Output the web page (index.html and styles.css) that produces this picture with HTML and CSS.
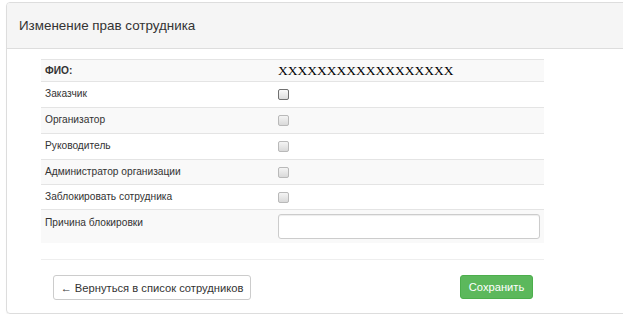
FILE: index.html
```html
<!DOCTYPE html>
<html lang="ru">
<head>
    <meta charset="UTF-8">
    <title>Изменение прав сотрудника</title>
    <link rel="stylesheet" href="styles.css">
</head>
<body>
  <div class="panel">
    <div class="panel-heading">
      <h3 class="panel-title">Изменение прав сотрудника</h3>
    </div>

    <div class="panel-body">
      <table class="rights-table">
        <tr class="fio-row">
          <td class="label-cell"><b>ФИО:</b></td>
          <td class="fio-value">XXXXXXXXXXXXXXXXXX</td>
        </tr>
        <tr>
          <td class="label-cell">Заказчик</td>
          <td><span class="check check-active"></span></td>
        </tr>
        <tr>
          <td class="label-cell">Организатор</td>
          <td><span class="check"></span></td>
        </tr>
        <tr>
          <td class="label-cell">Руководитель</td>
          <td><span class="check"></span></td>
        </tr>
        <tr class="short-row">
          <td class="label-cell">Администратор организации</td>
          <td><span class="check"></span></td>
        </tr>
        <tr class="short-row">
          <td class="label-cell">Заблокировать сотрудника</td>
          <td><span class="check"></span></td>
        </tr>
        <tr class="reason-row">
          <td class="label-cell">Причина блокировки</td>
          <td><input class="reason-input" type="text"></td>
        </tr>
      </table>

      <hr class="divider">

      <div class="actions">
        <button class="btn btn-default">&larr; Вернуться в список сотрудников</button>
        <button class="btn btn-success">Сохранить</button>
      </div>
    </div>
  </div>
</body>
</html>
```

FILE: styles.css
```css
:root {
  --clr-border: #dddddd;
  --clr-row: #f9f9f9;
  --clr-text: #333333;
  --clr-green: #5cb85c;
}
* { margin: 0; padding: 0; box-sizing: border-box; }
body {
  font-family: "Liberation Sans", Arial, sans-serif;
  font-size: 10.2px;
  color: var(--clr-text);
  background: #fff;
  padding: 2px 0 0 6px;
  overflow: hidden;
}
.panel {
  width: 660px;
  border: 1px solid var(--clr-border);
  border-radius: 4px;
  box-shadow: 0 1px 1px rgba(0,0,0,0.05);
}
.panel-heading {
  height: 46px;
  padding: 0 12px;
  display: flex;
  align-items: center;
  background: #f5f5f5;
  border-bottom: 1px solid var(--clr-border);
  border-radius: 3px 3px 0 0;
}
.panel-title {
  font-size: 13.4px;
  font-weight: normal;
  color: #333;
}
.panel-body {
  padding: 10px 0 13px 34px;
}
.rights-table {
  width: 503px;
  border-collapse: collapse;
}
.rights-table td {
  border-top: 1px solid #e4e4e4;
  padding: 3px 4px 5px;
  line-height: 17px;
  vertical-align: top;
}
.rights-table td:first-child { width: 237px; }
.rights-table tr:nth-child(odd) td { background: var(--clr-row); }
.fio-row td {
  padding: 2px 4px 2px;
  line-height: 17px;
}
.fio-row b { font-weight: bold; }
.fio-value {
  font-family: "Liberation Serif", "Times New Roman", serif;
  font-size: 13.5px;
  color: #000;
}
.short-row td { padding-bottom: 4px; }
.check {
  display: block;
  width: 11px;
  height: 11px;
  margin-top: 4px;
  border: 1px solid #b9b9b9;
  border-radius: 2px;
  background: linear-gradient(#f4f4f4, #d9d9d9);
}
.check-active {
  border-color: #707070;
  background: linear-gradient(#fafafa, #dcdcdc);
}
.reason-row td { padding: 4px 4px 4px; }
.reason-input {
  display: block;
  width: 262px;
  height: 25px;
  border: 1px solid #cccccc;
  border-radius: 3px;
  background: #fff;
  box-shadow: inset 0 1px 1px rgba(0,0,0,0.075);
}
.divider {
  width: 503px;
  border: 0;
  border-top: 1px solid #eeeeee;
  margin: 16px 0 15px;
}
.actions {
  width: 503px;
  padding: 0 11px 0 12px;
  display: flex;
  justify-content: space-between;
  align-items: flex-start;
}
.btn {
  font-family: "Liberation Sans", Arial, sans-serif;
  font-size: 11.2px;
  line-height: 16px;
  padding: 0;
  white-space: nowrap;
  border-radius: 3px;
  cursor: pointer;
}
.btn-default {
  width: 198px;
  height: 25px;
  background: #fff;
  color: #333;
  border: 1px solid #cccccc;
}
.btn-success {
  width: 73px;
  height: 24px;
  background: var(--clr-green);
  color: #fff;
  border: 1px solid #4cae4c;
}
```
